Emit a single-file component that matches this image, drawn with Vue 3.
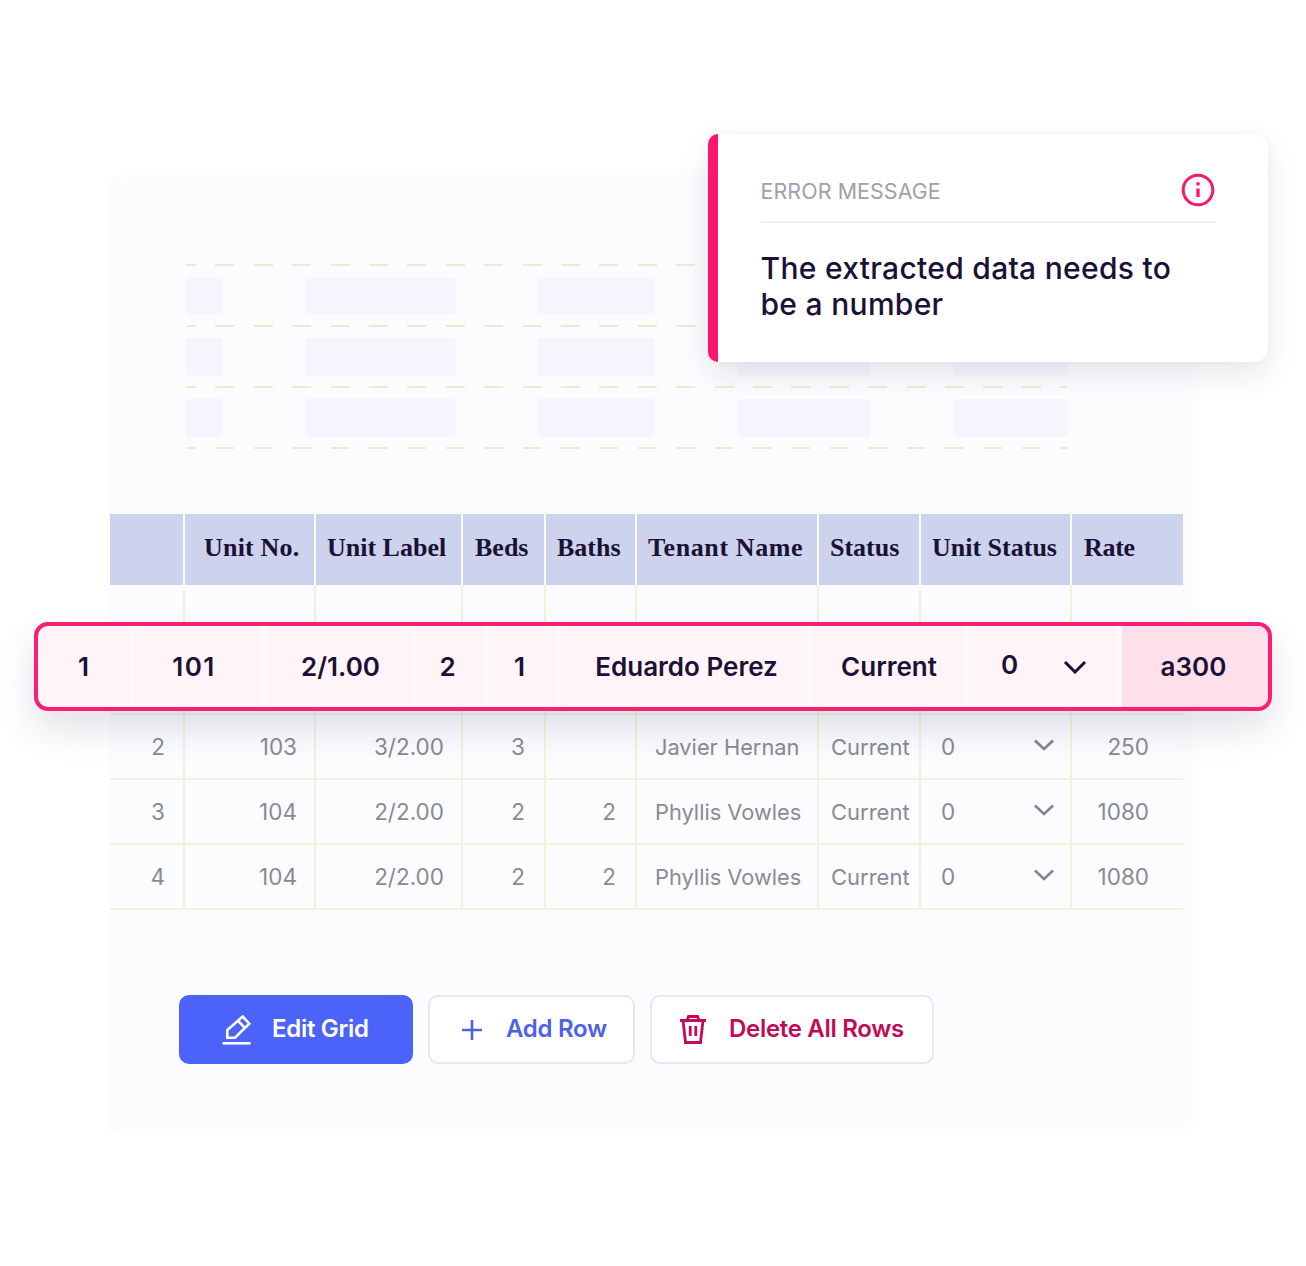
<script setup>
const headers = [
  { t: '', p: 0, s: 0 }, { t: 'Unit No.', p: 19, s: 0.2 }, { t: 'Unit Label', p: 11, s: 0 }, { t: 'Beds', p: 12, s: 0 },
  { t: 'Baths', p: 11, s: 0 }, { t: 'Tenant Name', p: 11, s: 0.6 }, { t: 'Status', p: 11, s: 0 }, { t: 'Unit Status', p: 11, s: 0 }, { t: 'Rate', p: 12, s: -0.3 }
]
const rows = [
  { n: '', u: '', l: '', b: '', ba: '', name: '', s: '', us: '', r: '' },
  { n: '', u: '', l: '', b: '', ba: '', name: '', s: '', us: '', r: '' },
  { n: '2', u: '103', l: '3/2.00', b: '3', ba: '', name: 'Javier Hernan', s: 'Current', us: '0', r: '250' },
  { n: '3', u: '104', l: '2/2.00', b: '2', ba: '2', name: 'Phyllis Vowles', s: 'Current', us: '0', r: '1080' },
  { n: '4', u: '104', l: '2/2.00', b: '2', ba: '2', name: 'Phyllis Vowles', s: 'Current', us: '0', r: '1080' }
]
const skeleton = [0, 1, 2]
const focusCells = [
  { t: '1', w: 97, o: -1, s: 0 }, { t: '101', w: 131, o: -4.5, s: 1.5 }, { t: '2/1.00', w: 149, o: 2, s: 0 }, { t: '2', w: 73, o: -2, s: 0 },
  { t: '1', w: 73, o: -3, s: 0 }, { t: 'Eduardo Perez', w: 251, o: 2, s: 0 }, { t: 'Current', w: 156, o: 1, s: 0 }
]
</script>

<template>
  <div class="page">
    <section class="sheet">
      <div class="skeleton">
        <div v-for="i in skeleton" :key="i" class="sk-row">
          <span class="sk s1"></span><span class="sk s2"></span><span class="sk s3"></span><span class="sk s4"></span><span class="sk s5"></span>
        </div>
        <div class="sk-end"></div>
      </div>

      <div class="table">
        <div class="thead">
          <div v-for="h in headers" :key="h.t" class="th" :style="{ paddingLeft: h.p + 'px', letterSpacing: h.s + 'px' }">{{ h.t }}</div>
        </div>
        <div v-for="(r, i) in rows" :key="i" class="tr">
          <div class="td num p20">{{ r.n }}</div>
          <div class="td num p19">{{ r.u }}</div>
          <div class="td num p19">{{ r.l }}</div>
          <div class="td num p21">{{ r.b }}</div>
          <div class="td num p21">{{ r.ba }}</div>
          <div class="td name">{{ r.name }}</div>
          <div class="td stat">{{ r.s }}</div>
          <div class="td unit">
            <span>{{ r.us }}</span>
            <svg v-if="r.us" class="chev" width="22" height="12" viewBox="0 0 22 12"><path d="M2 1.5 L11 10 L20 1.5" /></svg>
          </div>
          <div class="td num rate">{{ r.r }}</div>
        </div>
      </div>

      <div class="actions">
        <button class="btn primary">
          <svg class="ico-edit" width="30" height="30" viewBox="0 0 30 30"><path d="M20.7 1.5 L27.3 8.7 L13 22.7 H5.3 V15 Z M16.2 6 L23 13" /><path d="M0.5 28.3 H28.5" /></svg>
          <span>Edit Grid</span>
        </button>
        <button class="btn ghost add">
          <svg class="ico-plus" width="22" height="22" viewBox="0 0 22 22"><path d="M11 1 V21 M1 11 H21" /></svg>
          <span>Add Row</span>
        </button>
        <button class="btn ghost del">
          <svg class="ico-del" width="28" height="29" viewBox="0 0 28 29"><path d="M1 5.5 H27 M8 5.5 L9.5 1.5 H18.5 L20 5.5 M4 5.5 L6.5 27.5 H21.5 L24 5.5 M11.2 11 V21 M16.8 11 V21" /></svg>
          <span>Delete All Rows</span>
        </button>
      </div>
    </section>

    <aside class="card">
      <div class="card-head">
        <span class="label">ERROR MESSAGE</span>
        <svg width="34" height="34" viewBox="0 0 34 34"><circle cx="17" cy="17" r="14.8" class="ring" /><circle cx="17" cy="10.8" r="1.9" class="dot" /><path d="M17 15.5 V24" class="bar" /></svg>
      </div>
      <p class="msg">The extracted data needs to<br />be a number</p>
    </aside>

    <div class="focus">
      <div v-for="c in focusCells" :key="c.t + c.w" class="fcell" :style="{ width: c.w + 'px', paddingLeft: Math.max(c.o, 0) * 2 + 'px', paddingRight: Math.max(-c.o, 0) * 2 + 'px', letterSpacing: c.s + 'px' }">{{ c.t }}</div>
      <div class="fcell funit">
        <span class="zero">0</span>
        <svg class="fchev" width="24" height="14" viewBox="0 0 24 14"><path d="M2 2 L12 12 L22 2" /></svg>
      </div>
      <div class="fcell frate">a300</div>
    </div>
  </div>
</template>

<style>
html, body { margin: 0; background: #fff; }
</style>

<style scoped>
.page {
  position: relative;
  width: 1306px;
  height: 1266px;
  overflow: hidden;
  background: #fff;
  font-family: Inter, "Liberation Sans", sans-serif;
}
.sheet {
  box-sizing: border-box;
  width: 1073px;
  height: 952px;
  margin-left: 110px;
  position: relative;
  top: 178px;
  padding-top: 86px;
  background: #fbfcfe;
  box-shadow: 8px -2px 16px rgba(40, 50, 90, 0.025);
}
.skeleton { margin-left: 76px; width: 881px; filter: blur(0.6px); }
.sk-row {
  display: flex;
  height: 61px;
  box-sizing: border-box;
  padding-top: 13px;
  background: repeating-linear-gradient(90deg, #e9edd0 0 19px, transparent 19px 38.4px) -9px 0 / calc(100% + 9px) 2px no-repeat;
}
.sk-end {
  height: 2px;
  background: repeating-linear-gradient(90deg, #e9edd0 0 19px, transparent 19px 38.4px) -9px 0 / calc(100% + 9px) 2px no-repeat;
}
.sk { display: block; height: 38px; background: #f5f6fd; border-radius: 2px; flex: none; }
.s1 { width: 37px; }
.s2 { width: 151px; margin-left: 82px; }
.s3 { width: 118px; margin-left: 81px; }
.s4 { width: 133px; margin-left: 82px; }
.s5 { width: 115px; margin-left: 83px; }

.table { margin-top: 65px; }
.thead, .tr {
  display: grid;
  grid-template-columns: 75px 131px 147px 83px 91px 182px 102px 151px 111px;
}
.thead { height: 71px; }
.th {
  display: flex;
  align-items: center;
  box-sizing: border-box;
  background: #cdd3ec;
  border-right: 2px solid #fbfcfe;
  color: #1b1035;
  font-family: "Liberation Serif", serif;
  font-weight: 700;
  font-size: 26px;
  padding-bottom: 4px;
}
.th:last-child { border-right: 0; }
.tr { height: 65px; }
.td {
  display: flex;
  align-items: center;
  box-sizing: border-box;
  border-right: 2px solid #f0f2dd;
  border-bottom: 2px solid #f0f2dd;
  color: #8a8a95;
  font-size: 22.5px;
}
.td:last-child { border-right: 0; }
.num { justify-content: flex-end; }
.p20 { padding-right: 18px; }
.p19 { padding-right: 17px; }
.p21 { padding-right: 19px; }
.name { padding-left: 18px; font-size: 21.8px; }
.stat { padding-left: 12px; font-size: 22px; }
.unit { padding-left: 20px; justify-content: space-between; padding-right: 15px; }
.rate { padding-right: 34px; }
.chev { fill: none; stroke: #85858f; stroke-width: 2.6; margin-bottom: 3px; }

.actions { display: flex; gap: 15px; margin: 85px 0 0 69px; }
.btn {
  display: flex;
  align-items: center;
  box-sizing: border-box;
  height: 69px;
  border-radius: 10px;
  font-family: Inter, "Liberation Sans", sans-serif;
  font-size: 24px;
  font-weight: 600;
  letter-spacing: -0.3px;
  padding: 0;
}
.btn span { margin-bottom: 2px; }
.primary { width: 234px; background: #4c63fa; color: #fff; border: 0; padding-left: 43px; gap: 20px; }
.ghost { background: #fff; border: 2px solid #e5e7f5; }
.add { width: 207px; color: #4c63e8; padding-left: 31px; gap: 23px; }
.del { width: 284px; color: #c20a56; padding-left: 27px; gap: 22px; }
.ico-edit, .ico-plus, .ico-del { fill: none; stroke: currentColor; flex: none; }
.ico-edit { stroke-width: 2.6; }
.ico-plus { stroke-width: 2.6; }
.ico-del { stroke-width: 2.8; }

.card {
  position: absolute;
  left: 708px;
  top: 134px;
  box-sizing: border-box;
  width: 560px;
  height: 228px;
  background: #fff;
  border-left: 10px solid #f9176f;
  border-radius: 10px 14px 14px 10px;
  padding: 39px 52px 0 42.5px;
  box-shadow: 0 12px 30px rgba(30, 30, 70, 0.1), 0 0 10px rgba(30, 30, 70, 0.03);
}
.card-head {
  display: flex;
  align-items: center;
  justify-content: space-between;
  height: 48px;
  padding-bottom: 7px;
  margin-top: -7px;
  padding-right: 1px;
  border-bottom: 2px solid #eeeff2;
}
.label { color: #a0a0aa; font-size: 21.4px; letter-spacing: 0.1px; margin-top: 2px; }
.ring { fill: none; stroke: #f9176f; stroke-width: 3; }
.dot { fill: #f9176f; }
.bar { stroke: #f9176f; stroke-width: 3.4; fill: none; }
.msg {
  margin: 27px 0 0;
  color: #1b1035;
  font-size: 30px;
  font-weight: 450;
  line-height: 36px;
  letter-spacing: 0.3px;
}

.focus {
  position: absolute;
  left: 34px;
  top: 622px;
  box-sizing: border-box;
  width: 1238px;
  height: 89px;
  display: flex;
  background: #fff4f7;
  border: 4px solid #f81f74;
  border-radius: 14px;
  overflow: hidden;
  box-shadow: 0 18px 36px rgba(30, 30, 70, 0.13);
}
.fcell {
  display: flex;
  align-items: center;
  justify-content: center;
  box-sizing: border-box;
  flex: none;
  border-right: 4px solid #fffafb;
  color: #1b1035;
  font-size: 26px;
  font-weight: 600;
}
.funit { width: 154px; padding: 0 31px 0 33px; justify-content: space-between; }
.zero { margin-bottom: 4px; }
.fchev { fill: none; stroke: #1b1035; stroke-width: 3; }
.frate { flex: 1; background: #fde0e9; border-right: 0; padding-right: 3px; }
</style>
